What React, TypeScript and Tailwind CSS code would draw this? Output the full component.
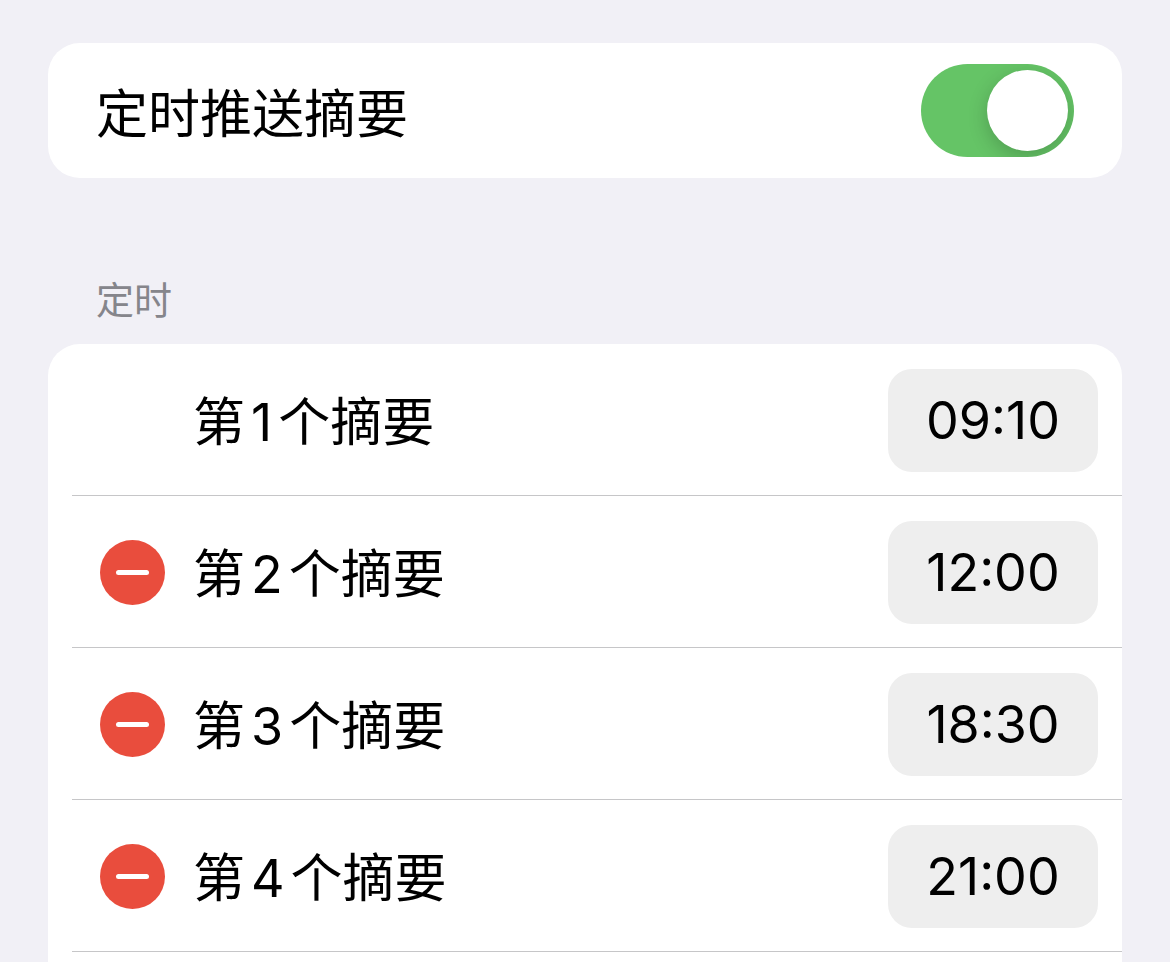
import { useState } from 'react'

type Slot = { id: number; time: string }

const initialSlots: Slot[] = [
  { id: 1, time: '09:10' },
  { id: 2, time: '12:00' },
  { id: 3, time: '18:30' },
  { id: 4, time: '21:00' },
]

function MinusIcon() {
  return (
    <svg viewBox="0 0 65 65" className="block size-full" aria-hidden="true">
      <circle cx="32.5" cy="32.5" r="32.5" fill="#e94d3d" />
      <rect x="16" y="30" width="33" height="5" rx="2.5" fill="#fff" />
    </svg>
  )
}

export default function App() {
  const [enabled, setEnabled] = useState(true)
  const [slots, setSlots]     = useState<Slot[]>(initialSlots)

  const remove = (id: number) => setSlots(slots.filter(s => s.id !== id))
  const update = (id: number, time: string) =>
    setSlots(slots.map(s => (s.id === id ? { ...s, time } : s)))

  return (
    <main className="flex min-h-screen flex-col bg-[#f1f0f6] px-12 pt-[43px] font-[Inter,'Noto_Sans_CJK_SC',sans-serif] text-black">
      <section className="flex h-[135px] items-center justify-between rounded-[32px] bg-white px-12">
        <label htmlFor="summary" className="pt-2 text-[52px] leading-[72px]">定时推送摘要</label>
        <input
          id="summary"
          type="checkbox"
          role="switch"
          checked={enabled}
          onChange={e => setEnabled(e.target.checked)}
          className="flex h-[93px] w-[153px] appearance-none items-center overflow-hidden rounded-full bg-[#e9e9eb] p-1.5 transition-colors before:size-[81px] before:rounded-full before:bg-white before:shadow-[0_6px_20px_rgba(0,0,0,0.2)] checked:justify-end checked:bg-[#65c466]"
        />
      </section>

      <h2 className="mt-[94px] px-12 text-[38px] leading-[56px] text-[#85858b]">定时</h2>

      <ul className="mt-4 grow rounded-t-[32px] bg-white pl-6">
        {slots.map(s => (
          <li key={s.id} className="flex items-center border-b border-[#c6c6c8] pt-[25px] pr-6 pb-[23px] pl-7">
            {/* the first summary can't be deleted */}
            <div className="mr-7 size-[65px] shrink-0">
              {s.id > 1 && (
                <button className="block size-full rounded-full" aria-label="删除" onClick={() => remove(s.id)}>
                  <MinusIcon />
                </button>
              )}
            </div>
            <label htmlFor={`time-${s.id}`} className="grow pt-1 text-[52px] leading-[72px]">
              第<span className="mx-1.5">{s.id}</span>个摘要
            </label>
            <input
              id={`time-${s.id}`}
              value={s.time}
              onChange={e => update(s.id, e.target.value)}
              className="h-[103px] w-[210px] rounded-3xl bg-[#eeeeee] text-center text-[52px]"
            />
          </li>
        ))}
      </ul>
    </main>
  )
}
